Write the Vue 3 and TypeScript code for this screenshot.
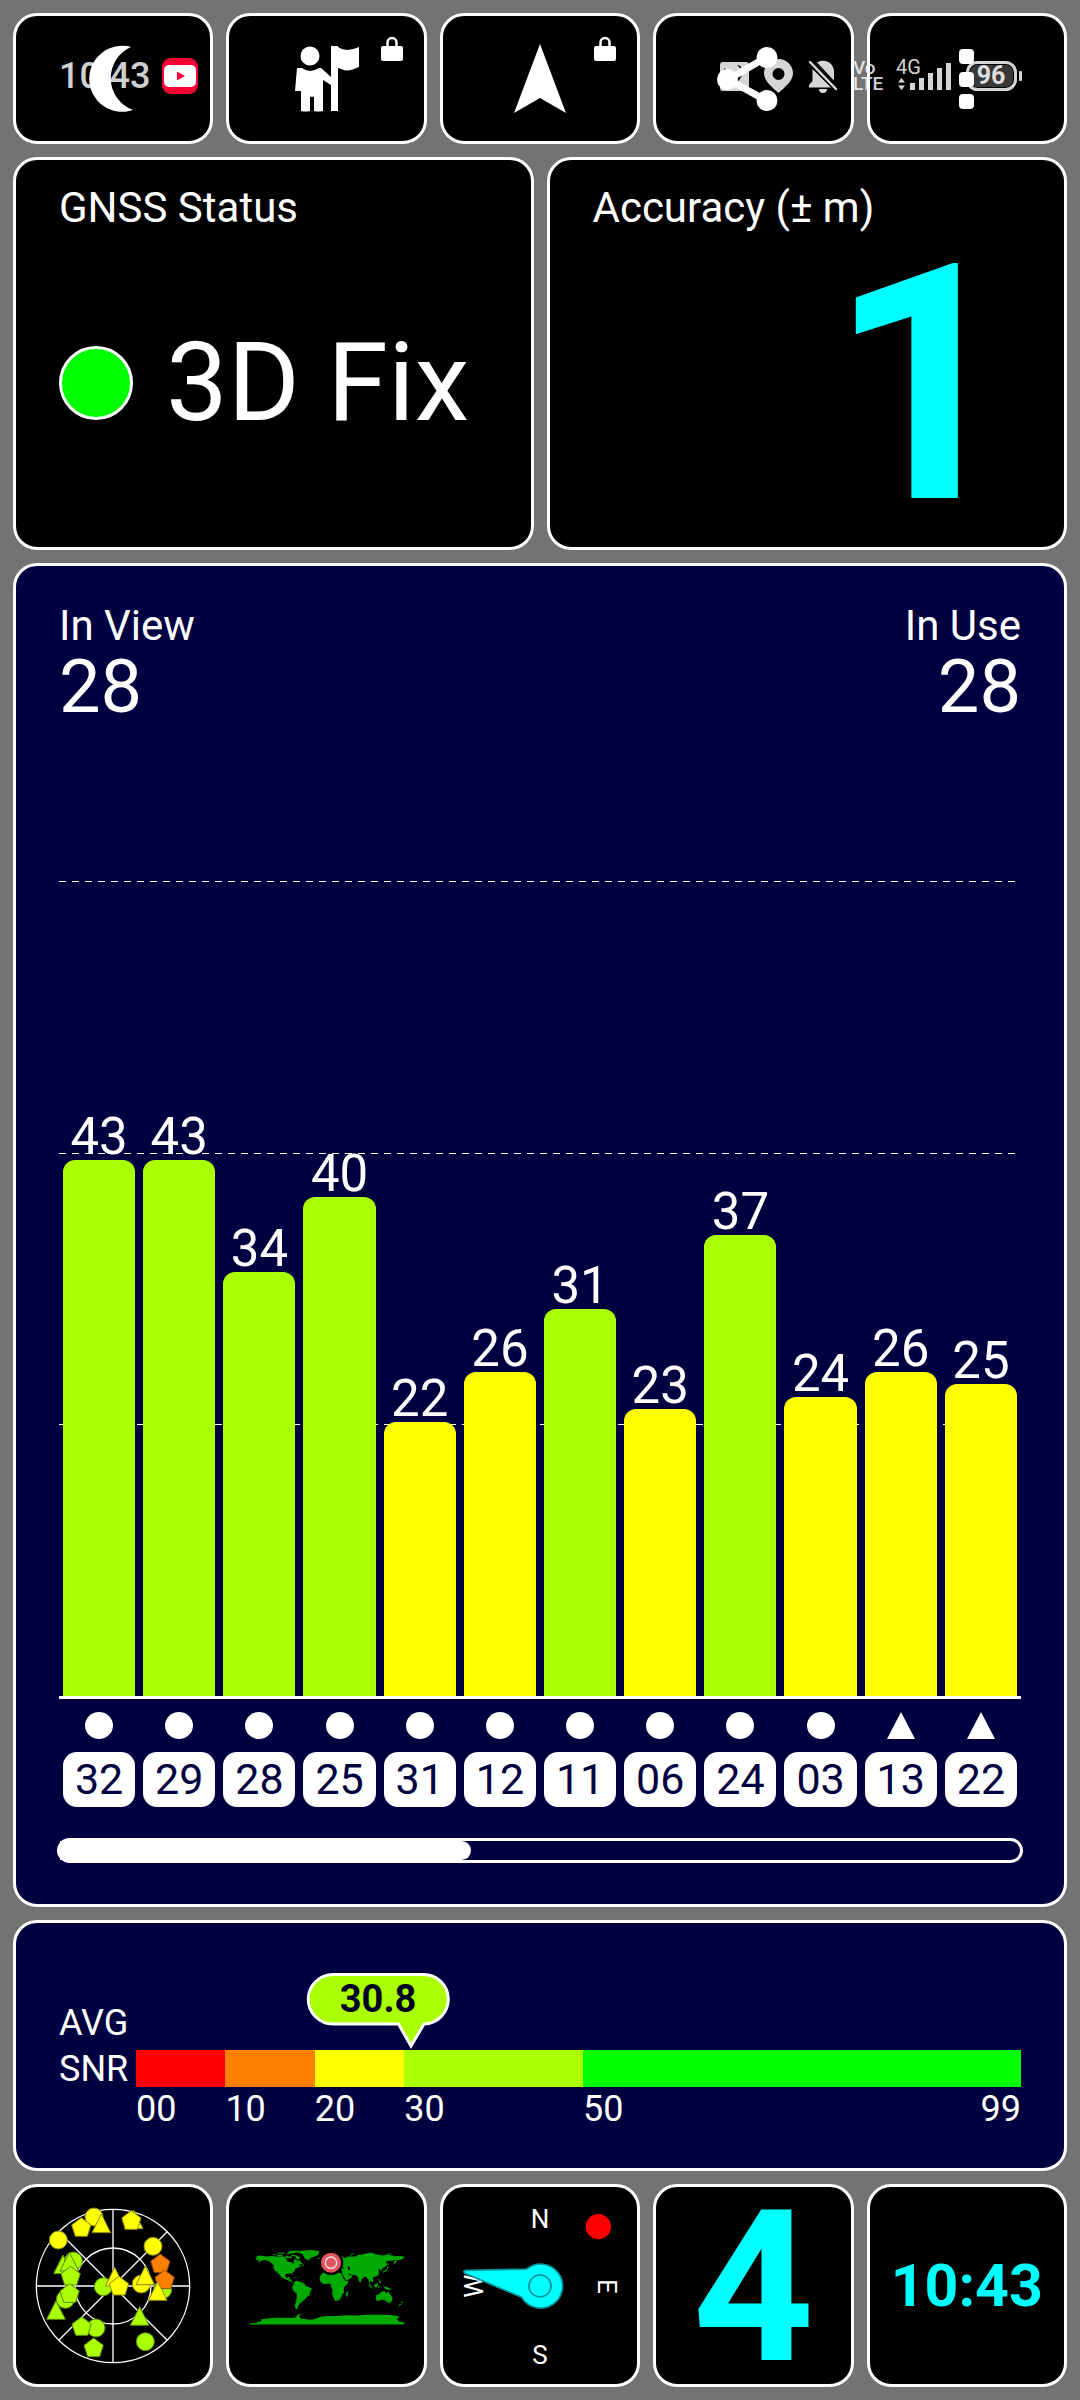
<script setup lang="ts">
interface Satellite {
  id: string
  snr: number
  kind: 'circle' | 'triangle'
}

interface Band {
  from: number
  to: number
  color: string
}

interface SkyMark {
  shape: 'circle' | 'triangle' | 'pentagon'
  x: number
  y: number
  tone: 'yellow' | 'lime' | 'orange'
}

const LIME = '#aaff00'
const YELLOW = '#ffff00'
const PLOT_MAX = 65.35
const SNR_MAX = 99

const inView = 28
const inUse = 28
const averageSnr = 30.8

const satellites: Satellite[] = [
  { id: '32', snr: 43, kind: 'circle' },
  { id: '29', snr: 43, kind: 'circle' },
  { id: '28', snr: 34, kind: 'circle' },
  { id: '25', snr: 40, kind: 'circle' },
  { id: '31', snr: 22, kind: 'circle' },
  { id: '12', snr: 26, kind: 'circle' },
  { id: '11', snr: 31, kind: 'circle' },
  { id: '06', snr: 23, kind: 'circle' },
  { id: '24', snr: 37, kind: 'circle' },
  { id: '03', snr: 24, kind: 'circle' },
  { id: '13', snr: 26, kind: 'triangle' },
  { id: '22', snr: 25, kind: 'triangle' },
]

const bands: Band[] = [
  { from: 0, to: 10, color: '#ff0000' },
  { from: 10, to: 20, color: '#ff8000' },
  { from: 20, to: 30, color: YELLOW },
  { from: 30, to: 50, color: LIME },
  { from: 50, to: 99, color: '#00ff00' },
]

const skyMarks: SkyMark[] = [
  { shape: 'circle', x: 283, y: 139, tone: 'yellow' },
  { shape: 'pentagon', x: 245, y: 170, tone: 'yellow' },
  { shape: 'triangle', x: 305, y: 160, tone: 'yellow' },
  { shape: 'circle', x: 176, y: 208, tone: 'yellow' },
  { shape: 'triangle', x: 402, y: 148, tone: 'yellow' },
  { shape: 'pentagon', x: 395, y: 149, tone: 'yellow' },
  { shape: 'circle', x: 460, y: 227, tone: 'yellow' },
  { shape: 'triangle', x: 190, y: 283, tone: 'lime' },
  { shape: 'circle', x: 221, y: 271, tone: 'lime' },
  { shape: 'triangle', x: 209, y: 275, tone: 'lime' },
  { shape: 'pentagon', x: 213, y: 316, tone: 'lime' },
  { shape: 'circle', x: 197, y: 386, tone: 'lime' },
  { shape: 'pentagon', x: 210, y: 368, tone: 'lime' },
  { shape: 'triangle', x: 169, y: 420, tone: 'lime' },
  { shape: 'circle', x: 289, y: 472, tone: 'lime' },
  { shape: 'pentagon', x: 246, y: 467, tone: 'lime' },
  { shape: 'pentagon', x: 282, y: 531, tone: 'lime' },
  { shape: 'circle', x: 437, y: 513, tone: 'lime' },
  { shape: 'triangle', x: 420, y: 438, tone: 'lime' },
  { shape: 'circle', x: 311, y: 348, tone: 'lime' },
  { shape: 'triangle', x: 345, y: 320, tone: 'yellow' },
  { shape: 'pentagon', x: 358, y: 346, tone: 'yellow' },
  { shape: 'circle', x: 425, y: 340, tone: 'yellow' },
  { shape: 'triangle', x: 437, y: 316, tone: 'yellow' },
  { shape: 'circle', x: 489, y: 357, tone: 'lime' },
  { shape: 'pentagon', x: 482, y: 279, tone: 'orange' },
  { shape: 'pentagon', x: 495, y: 327, tone: 'orange' },
  { shape: 'triangle', x: 474, y: 363, tone: 'yellow' },
]

// Longitude / latitude outlines
const land: string[] = [
  '-168,66 -162,70 -156,71 -141,69 -128,70 -115,68 -108,68 -96,68 -94,72 -90,69 -82,69 -81,66 -87,64 -94,60 -92,57 -82,55 -79,52 -77,56 -78,62 -73,62 -68,59 -64,60 -60,55 -56,52 -66,50 -60,46 -66,44 -70,42 -74,40 -76,35 -81,31 -80,26 -82,28 -84,30 -90,29 -97,28 -97,22 -94,18 -90,21 -87,21 -88,16 -83,15 -83,10 -77,8 -80,7 -85,10 -92,14 -100,17 -105,20 -109,25 -114,31 -110,23 -117,33 -121,35 -124,40 -124,48 -130,54 -136,58 -146,61 -152,59 -158,56 -164,55 -157,59 -165,61 -166,64 -162,66',
  '-80,73 -70,71 -62,66 -66,62 -74,65 -72,68 -85,71',
  '-118,72 -105,73 -102,69 -115,69',
  '-125,74 -118,74 -120,72 -125,72',
  '-118,77 -98,78 -100,75 -112,75',
  '-92,77 -86,82 -62,83 -72,79 -78,76',
  '-96,77 -80,75 -92,74',
  '-73,78 -60,82 -35,84 -18,81 -20,74 -25,70 -38,66 -43,60 -51,63 -54,69 -58,75',
  '-59,51 -53,49 -54,47 -59,48',
  '-85,22 -77,21 -74,20 -77,20 -84,22',
  '-73,20 -68,19 -74,18',
  '-77,8 -72,12 -62,10 -52,5 -50,0 -44,-2 -35,-6 -39,-13 -41,-22 -48,-26 -53,-33 -58,-35 -57,-38 -62,-39 -65,-42 -66,-46 -69,-51 -68,-55 -74,-52 -75,-46 -73,-38 -71,-30 -70,-18 -76,-14 -81,-6 -80,-1 -78,3',
  '-6,35 10,37 11,34 20,31 32,31 36,24 38,18 43,11 51,12 47,4 40,-3 39,-11 40,-16 35,-20 35,-24 32,-28 28,-33 19,-35 15,-27 12,-17 13,-8 9,-1 9,4 4,6 -8,4 -15,10 -17,15 -17,21 -13,27 -9,32',
  '49,-12 50,-16 47,-25 44,-24 44,-17',
  '-9,37 -9,43 -1,44 -4,48 2,51 8,54 8,57 11,56 13,54 20,55 22,60 28,60 22,62 25,66 18,62 17,58 13,56 6,58 5,62 14,67 24,71 32,70 41,67 36,64 44,66 46,68 60,69 68,69 72,73 80,73 88,75 104,78 113,74 130,71 140,73 160,70 180,69 180,65 172,61 163,60 162,56 157,51 156,57 163,62 150,59 142,59 136,54 141,53 140,48 132,43 127,39 129,35 126,35 125,39 121,39 118,38 122,37 120,33 122,30 118,24 110,21 106,19 109,12 105,9 101,13 100,8 104,1 101,3 98,10 97,16 94,17 91,22 87,21 80,15 79,9 76,9 73,17 72,21 67,25 57,26 50,30 52,25 56,26 59,22 52,16 44,13 42,18 35,29 36,36 28,37 26,40 23,37 19,42 13,46 12,44 18,40 16,38 10,44 3,43 -1,37',
  '-5,50 1,52 -2,56 -4,58 -6,56',
  '-24,65 -16,66 -15,64 -21,63',
  '53,72 58,75 68,77 60,74 57,71',
  '12,79 20,80 26,79 17,77',
  '140,75 150,76 150,74 140,73',
  '142,54 144,50 142,46',
  '140,45 145,43 141,41 140,36 136,34 131,31 130,34 135,36 139,39',
  '121,25 122,23 120,22',
  '120,18 122,17 122,13 125,11 126,7 122,7 122,11 120,14',
  '109,2 113,4 117,7 119,5 117,-3 113,-3 110,-1',
  '95,5 100,2 106,-4 105,-6 100,-2',
  '105,-6 114,-8 124,-9 115,-9 106,-7',
  '119,0 125,1 121,-1 123,-5 120,-4 119,-2',
  '131,-1 138,-2 145,-5 150,-10 143,-9 138,-8 134,-4',
  '150,-5 152,-4 152,-6 148,-6',
  '114,-22 122,-18 126,-14 131,-12 136,-12 136,-15 140,-17 142,-11 146,-18 150,-23 153,-27 152,-32 150,-37 146,-39 140,-38 136,-34 131,-32 124,-33 118,-35 115,-34',
  '145,-41 148,-41 147,-44',
  '173,-35 178,-38 175,-41 174,-38',
  '172,-41 174,-42 168,-47 167,-45',
  '-180,-90 -180,-87 -160,-86 -165,-84 -152,-82 -155,-78 -140,-76 -120,-74 -100,-74 -75,-74 -68,-67 -58,-64 -65,-70 -62,-76 -40,-79 -28,-77 -15,-72 0,-70 25,-70 45,-68 70,-69 90,-67 120,-67 145,-67 170,-71 163,-77 168,-83 180,-85 180,-90',
]

const pad = (n: number): string => String(n).padStart(2, '0')
const barColor = (snr: number): string => (snr >= 30 ? LIME : YELLOW)
</script>

<template>
  <main class="screen">
    <div class="status-bar">
      <div class="status-group">
        <span class="clock">10:43</span>
        <svg class="app-badge" width="36" height="36" viewBox="0 0 36 36" aria-hidden="true">
          <rect width="36" height="36" rx="9" fill="#f80538" />
          <rect x="2" y="7" width="32" height="22" rx="5" fill="#fff" />
          <path d="M15 13.5v9l8-4.500z" fill="#f80538" />
        </svg>
      </div>
      <div class="status-group status-right">
        <svg width="29" height="29" viewBox="0 0 29 29" aria-hidden="true">
          <path class="tint" fill-rule="evenodd" d="M3 0H26a3 3 0 0 1 3 3V26a3 3 0 0 1-3 3H3a3 3 0 0 1-3-3V3a3 3 0 0 1 3-3zM4 6 15 16 21 9Q20 5 17 3 20 3 22 6 24 11 20 17L16 22Q10 16 4 11z" />
        </svg>
        <svg width="29" height="34" viewBox="0 0 29 34" aria-hidden="true">
          <path class="tint" fill-rule="evenodd" d="M14.500 0A14.500 14.500 0 0 1 29 14.500C29 22 20 29 14.500 34 9 29 0 22 0 14.500A14.500 14.500 0 0 1 14.500 0zm0 9a6 6 0 1 0 0 12 6 6 0 0 0 0-12z" />
        </svg>
        <svg width="30" height="34" viewBox="0 0 30 34" aria-hidden="true">
          <path class="tint" d="M9 3.500A11 11 0 0 1 26 12V21.500zM4.500 10 23 28.500H1V26l3.500-4zM11 30h8a4 4 0 0 1-8 0z" />
          <path d="M2 3 28 30" class="tint-line" stroke-width="2.500" stroke-linecap="round" />
        </svg>
        <span class="volte"><span>Vo</span><span>LTE</span></span>
        <svg class="signal" width="52" height="32" viewBox="0 0 52 32">
          <text x="-3" y="14" class="tint signal-text">4G</text>
          <path class="tint" d="M-1 22.500 2.500 18 6 22.500zM-1 25.500 2.500 30 6 25.500zM11 23h5v7h-5zM20 18h5v12h-5zM29 13h5v17h-5zM38 8h5v22h-5zM47 3h5v27h-5z" />
        </svg>
        <svg width="56" height="30" viewBox="0 0 56 30">
          <rect x="4" y="4" width="43" height="22" rx="7" fill="#fff" fill-opacity="0.220" />
          <rect x="1.500" y="1.500" width="48" height="27" rx="10" fill="none" class="tint-line" stroke-width="3" />
          <rect x="53" y="10" width="3" height="10" rx="1" class="tint" />
          <text x="25" y="23" text-anchor="middle" class="battery-text">96</text>
        </svg>
      </div>
    </div>

    <nav class="row five">
      <button type="button" class="card tool" aria-label="Night mode">
        <svg width="80" height="80" viewBox="0 0 80 80">
          <path fill="#fff" d="M58 8A33 33 0 1 0 60 71 34 34 0 0 1 58 8z" />
        </svg>
      </button>
      <button type="button" class="card tool" aria-label="Guide">
        <svg width="80" height="80" viewBox="0 0 80 80">
          <g fill="#fff">
            <circle cx="23" cy="17" r="9.500" />
            <path d="M10 29h5q8 6 17 0h2l10 9V7h7v65h-7V46l-8-5v31q-5 1-9 0V58q-2-1-4 0v14q-5 1-9 0V52H8z" />
            <path d="M51 8q8 6 21 0v20q-11 5-15 3l-6-2z" />
          </g>
        </svg>
        <svg class="lock" width="22" height="25" viewBox="0 0 22 25">
          <rect y="10" width="22" height="15" rx="2" fill="#fff" />
          <path d="M6.500 11V6.500a4.500 4.500 0 0 1 9 0V11" fill="none" stroke="#fff" stroke-width="2.500" />
        </svg>
      </button>
      <button type="button" class="card tool" aria-label="Navigate">
        <svg width="80" height="80" viewBox="0 0 80 80">
          <path fill="#fff" d="M40 5 66 74 40 59 14 74z" />
        </svg>
        <svg class="lock" width="22" height="25" viewBox="0 0 22 25">
          <rect y="10" width="22" height="15" rx="2" fill="#fff" />
          <path d="M6.500 11V6.500a4.500 4.500 0 0 1 9 0V11" fill="none" stroke="#fff" stroke-width="2.500" />
        </svg>
      </button>
      <button type="button" class="card tool" aria-label="Share">
        <svg width="80" height="80" viewBox="0 0 80 80">
          <path d="M54 18 15 40.500 54 62" fill="none" stroke="#fff" stroke-width="7" />
          <g fill="#fff">
            <circle cx="54" cy="18.500" r="10.500" />
            <circle cx="14.500" cy="40.500" r="10.500" />
            <circle cx="54" cy="61.500" r="10.500" />
          </g>
        </svg>
      </button>
      <button type="button" class="card tool" aria-label="More">
        <svg width="80" height="80" viewBox="0 0 80 80" fill="#fff">
          <rect x="32" y="10" width="15" height="15" rx="4" />
          <rect x="32" y="33" width="15" height="15" rx="4" />
          <rect x="32" y="55" width="15" height="15" rx="4" />
        </svg>
      </button>
    </nav>

    <div class="row two">
      <section class="card info">
        <h2 class="label">GNSS Status</h2>
        <div class="fix">
          <span class="fix-dot"></span>
          <span class="fix-text">3D Fix</span>
        </div>
      </section>
      <section class="card info">
        <h2 class="label">Accuracy (± m)</h2>
        <div class="accuracy">1</div>
      </section>
    </div>

    <section class="card navy chart">
      <header class="chart-head">
        <div>
          <div class="label">In View</div>
          <div class="count">{{ inView }}</div>
        </div>
        <div class="in-use">
          <div class="label">In Use</div>
          <div class="count">{{ inUse }}</div>
        </div>
      </header>
      <div class="plot">
        <span class="grid-line"></span>
        <span class="grid-line second"></span>
        <span class="grid-line third"></span>
        <div v-for="sat in satellites" :key="sat.id" class="column">
          <span class="snr">{{ sat.snr }}</span>
          <span
            class="bar"
            :style="{ height: (sat.snr / PLOT_MAX) * 100 + '%', background: barColor(sat.snr) }"
          ></span>
        </div>
      </div>
      <div class="axis">
        <div v-for="sat in satellites" :key="sat.id" class="tick">
          <svg width="28" height="27" viewBox="0 0 28 27" fill="#fff" aria-hidden="true">
            <ellipse v-if="sat.kind === 'circle'" cx="14" cy="13.500" rx="14" ry="13.500" />
            <path v-else d="M14 0 28 27H0z" />
          </svg>
          <span class="chip">{{ sat.id }}</span>
        </div>
      </div>
      <div class="scroll">
        <div class="thumb" :style="{ width: (satellites.length / inView) * 100 + '%' }"></div>
      </div>
    </section>

    <section class="card navy average">
      <div class="avg-label">AVG<br />SNR</div>
      <div class="scale">
        <div class="bands">
          <span
            v-for="b in bands"
            :key="b.from"
            class="band"
            :style="{ flexGrow: b.to - b.from, background: b.color }"
          ></span>
          <svg
            class="bubble"
            width="142"
            height="77"
            viewBox="0 0 142 77"
            :style="{ left: (averageSnr / SNR_MAX) * 100 + '%' }"
          >
            <path
              d="M26 1.500H116a24.500 24.500 0 0 1 1 49.500L104 73 91.500 51H26a24.500 24.500 0 0 1 0-49.500z"
              fill="#aaff00"
              stroke="#fff"
              stroke-width="3"
            />
            <text x="71" y="39" text-anchor="middle" class="bubble-text">{{ averageSnr }}</text>
          </svg>
        </div>
        <div class="band-labels">
          <span v-for="b in bands" :key="b.from" class="band-label" :style="{ flexGrow: b.to - b.from }">
            <span>{{ pad(b.from) }}</span>
            <span v-if="b.to === SNR_MAX">{{ b.to }}</span>
          </span>
        </div>
      </div>
    </section>

    <div class="row five">
      <section class="card tile">
        <svg width="160" height="160" viewBox="100 106 480 480">
          <g fill="none" stroke="#fff" stroke-width="4">
            <circle cx="340" cy="346" r="230" />
            <circle cx="340" cy="346" r="114" />
            <path d="M340 116V576M110 346H570M178 184 502 508M178 508 502 184" />
          </g>
          <g v-for="(m, i) in skyMarks" :key="i" :transform="`translate(${m.x} ${m.y})`" :class="['mark', m.tone]">
            <circle v-if="m.shape === 'circle'" r="27" />
            <path v-else-if="m.shape === 'triangle'" d="M0-30 28 26H-28z" />
            <path v-else d="M0-29 29-7 18 27H-18L-29-7z" />
          </g>
        </svg>
      </section>
      <section class="card tile">
        <svg width="160" height="160" viewBox="79 106 480 480">
          <g transform="translate(319 346) scale(1.286 -1.286)">
            <polygon v-for="(shape, i) in land" :key="i" :points="shape" fill="#00aa00" />
            <path fill="#000" d="M28 42 32 46 41 42 40 41zM48 45 52 46 54 38 50 37zM-98 64-92 66-86 64-93 61z" />
          </g>
          <circle cx="331" cy="276" r="37" fill="#000" />
          <circle cx="331" cy="276" r="30" fill="#e05560" />
          <circle cx="331" cy="276" r="17" fill="#e05560" stroke="#ffe4e0" stroke-width="4" />
        </svg>
      </section>
      <section class="card tile">
        <svg width="160" height="160" viewBox="720 106 480 480">
          <g class="compass-text" text-anchor="middle">
            <text x="960" y="171">N</text>
            <text x="960" y="580">S</text>
            <text transform="translate(1133 347) rotate(90)">E</text>
            <text transform="translate(788 347) rotate(-90)">W</text>
          </g>
          <circle cx="1135" cy="168" r="38" fill="#f00" />
          <g fill="#0ff" stroke="#0a9098" stroke-width="5" stroke-linejoin="round">
            <path d="M736 299 920 295A66 66 0 1 1 905 380L734 308Q729 300 736 299z" />
            <circle cx="960" cy="346" r="33" />
          </g>
        </svg>
      </section>
      <section class="card tile digit">4</section>
      <section class="card tile time">10:43</section>
    </div>
  </main>
</template>

<style>
body {
  margin: 0;
  background: #737373;
}
</style>

<style scoped>
.screen {
  position: relative;
  box-sizing: border-box;
  min-height: 100vh;
  padding: 13px;
  display: grid;
  grid-template-rows: auto auto 1fr auto auto;
  gap: 13px;
  background: #737373;
  color: #fff;
  font-family: Roboto, "Liberation Sans", sans-serif;
}

.screen svg {
  display: block;
  flex: none;
  overflow: visible;
}

.row {
  display: grid;
  gap: 13px;
}

.five {
  grid-template-columns: repeat(5, minmax(0, 1fr));
}

.two {
  grid-template-columns: repeat(2, minmax(0, 1fr));
}

.card {
  box-sizing: border-box;
  min-width: 0;
  border: 3px solid #fff;
  border-radius: 24px;
  background: #000;
}

.navy {
  background: #000040;
}

/* System status bar, drawn over the toolbar */
.status-bar {
  position: absolute;
  top: 58px;
  left: 59px;
  right: 58px;
  height: 36px;
  display: flex;
  justify-content: space-between;
  pointer-events: none;
  z-index: 1;
  color: rgba(255, 255, 255, 0.84);
}

.status-group {
  display: flex;
  align-items: center;
  gap: 12px;
}

.status-right {
  gap: 15px;
}

.clock {
  font-size: 36px;
  line-height: 36px;
  font-weight: 500;
}

.tint {
  fill: rgba(255, 255, 255, 0.84);
}

.tint-line {
  stroke: rgba(255, 255, 255, 0.84);
}

.volte {
  display: flex;
  flex-direction: column;
  width: 31px;
  font-size: 19px;
  line-height: 16px;
  font-weight: 500;
}

.signal-text {
  font-size: 20px;
}

.battery-text {
  font-size: 25px;
  font-weight: 700;
  fill: #dedede;
}

.tool {
  position: relative;
  display: flex;
  align-items: center;
  justify-content: center;
  height: 131px;
  padding: 0;
}

.lock {
  position: absolute;
  top: 20px;
  right: 21px;
}

.info {
  display: flex;
  flex-direction: column;
  min-height: 393px;
  padding: 23px 43px 14px;
}

.label {
  margin: 0;
  font-size: 42px;
  line-height: 50px;
  font-weight: 400;
}

.fix {
  flex: 1;
  display: flex;
  align-items: center;
  gap: 33px;
}

.fix-dot {
  box-sizing: border-box;
  width: 74px;
  height: 74px;
  border: 3px solid #fff;
  border-radius: 50%;
  background: #0f0;
}

.fix-text {
  font-size: 110px;
  line-height: 130px;
}

.accuracy {
  margin-bottom: -6px;
  padding-right: 3px;
  color: #0ff;
  font-size: 330px;
  line-height: 306px;
  font-weight: 700;
  text-align: right;
}

.chart {
  display: flex;
  flex-direction: column;
  padding: 35px 43px 41px;
}

.chart-head {
  display: flex;
  justify-content: space-between;
  margin-bottom: 158px;
}

.in-use {
  text-align: right;
}

.count {
  font-size: 74px;
  line-height: 72px;
}

.plot {
  position: relative;
  flex: 1;
  display: grid;
  grid-template-columns: repeat(12, minmax(0, 1fr));
  min-height: 400px;
  border-bottom: 3px solid #fff;
}

.grid-line {
  position: absolute;
  left: 0;
  right: 4px;
  top: 0;
  height: 1px;
  background: repeating-linear-gradient(90deg, #fff 0 7px, transparent 7px 13px);
}

.grid-line.second {
  top: 33.333%;
}

.grid-line.third {
  top: 66.667%;
}

.column {
  position: relative;
  display: flex;
  flex-direction: column;
  justify-content: flex-end;
  padding: 0 4px;
}

.snr {
  font-size: 51px;
  line-height: 47px;
  text-align: center;
}

.bar {
  flex: none;
  border-radius: 12px 12px 0 0;
}

.axis {
  display: grid;
  grid-template-columns: repeat(12, minmax(0, 1fr));
  margin: 13px 0 31px;
}

.tick {
  display: flex;
  flex-direction: column;
  align-items: center;
  gap: 13px;
  padding: 0 4px;
}

.chip {
  align-self: stretch;
  border-radius: 14px;
  background: #fff;
  color: #000040;
  font-size: 43px;
  line-height: 55px;
  text-align: center;
}

.scroll {
  box-sizing: border-box;
  height: 25px;
  margin: 0 -2px;
  border: 3px solid #fff;
  border-radius: 13px;
}

.thumb {
  height: 100%;
  border-radius: 0 10px 10px 0;
  background: #fff;
}

.average {
  display: grid;
  grid-template-columns: 77px minmax(0, 1fr);
  padding: 77px 43px 37px;
  font-size: 36px;
}

.avg-label {
  line-height: 46px;
}

.scale {
  padding-top: 50px;
}

.bands {
  position: relative;
  display: flex;
  height: 37px;
}

.band {
  flex-basis: 0;
}

.bubble {
  position: absolute;
  bottom: 100%;
  margin-left: -104px;
}

.bubble-text {
  font-size: 38px;
  font-weight: 700;
  fill: #000020;
}

.band-labels {
  display: flex;
  line-height: 44px;
}

.band-label {
  flex-basis: 0;
  display: flex;
  justify-content: space-between;
}

.tile {
  display: flex;
  align-items: center;
  justify-content: center;
  height: 203px;
  color: #0ff;
  font-weight: 700;
}

.digit {
  padding-top: 4px;
  font-size: 212px;
  line-height: 193px;
}

.time {
  font-size: 59px;
}

.mark {
  stroke-width: 3;
}

.yellow {
  fill: #ff0;
  stroke: #8a8a10;
}

.lime {
  fill: #af0;
  stroke: #5a8a10;
}

.orange {
  fill: #ff8000;
  stroke: #8a4a10;
}

.compass-text {
  fill: #fff;
  font-size: 78px;
  font-weight: 400;
}
</style>
